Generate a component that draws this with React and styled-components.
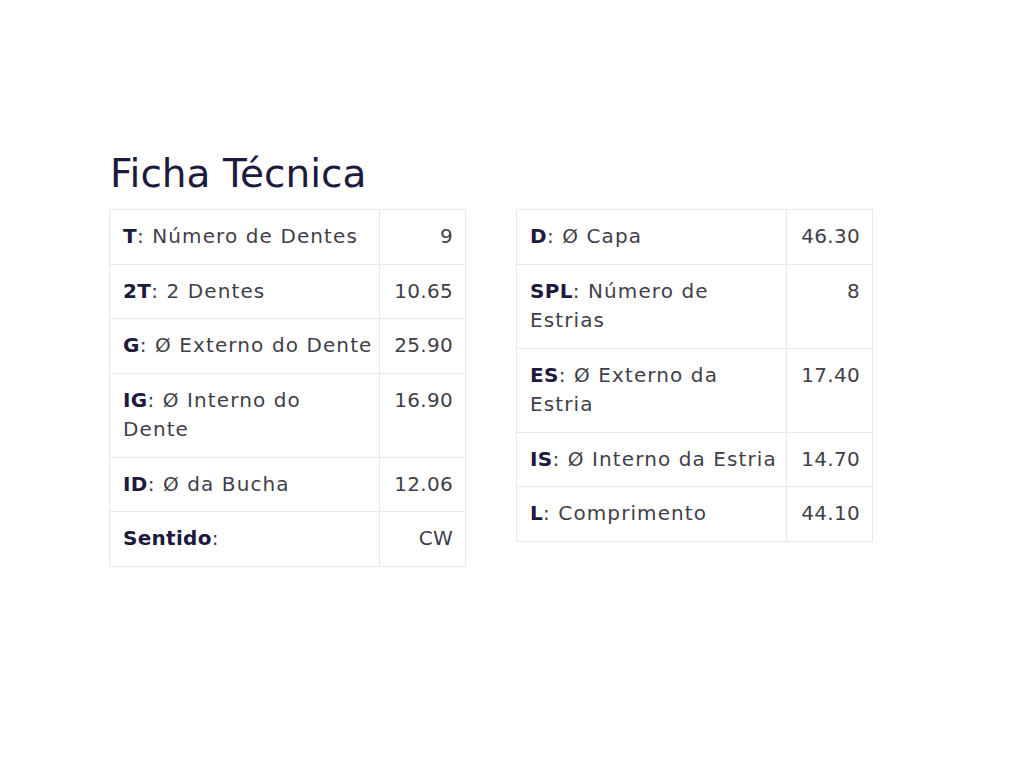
import styled, { createGlobalStyle } from "styled-components";

const GlobalStyle = createGlobalStyle`
  html, body {
    margin: 0;
    padding: 0;
    background: #ffffff;
  }
  body {
    font-family: "DejaVu Sans", "Open Sans", sans-serif;
  }
`;

const Page = styled.div`
  width: 1024px;
  height: 768px;
  padding: 149px 0 0 109px;
  box-sizing: border-box;
`;

const Title = styled.h2`
  margin: 0 0 11px 1px;
  font-family: "DejaVu Sans", "Open Sans", sans-serif;
  font-weight: 400;
  font-size: 39px;
  line-height: 49px;
  color: #1d1a3d;
`;

const Tables = styled.div`
  display: flex;
  align-items: flex-start;
  gap: 50px;
`;

const Table = styled.table`
  width: 357px;
  border-collapse: collapse;
  table-layout: fixed;
`;

const Cell = styled.td`
  border: 1px solid #e8e8ea;
  padding: 12px ${(p) => (p.$value ? "12px" : "6px")} 12px 13px;
  font-size: 20px;
  line-height: 29.5px;
  letter-spacing: ${(p) => (p.$value ? "0.3px" : "1.1px")};
  color: #3f3f4a;
  vertical-align: top;
  text-align: ${(p) => (p.$value ? "right" : "left")};
  width: ${(p) => (p.$value ? "86px" : "auto")};
  box-sizing: border-box;
`;

const Key = styled.strong`
  font-weight: 700;
  letter-spacing: 0.3px;
  color: #1d1a3d;
`;

const left = [
  ["T", "Número de Dentes", "9"],
  ["2T", "2 Dentes", "10.65"],
  ["G", "Ø Externo do Dente", "25.90"],
  ["IG", "Ø Interno do Dente", "16.90"],
  ["ID", "Ø da Bucha", "12.06"],
  ["Sentido", "", "CW"],
];

const right = [
  ["D", "Ø Capa", "46.30"],
  ["SPL", "Número de Estrias", "8"],
  ["ES", "Ø Externo da Estria", "17.40"],
  ["IS", "Ø Interno da Estria", "14.70"],
  ["L", "Comprimento", "44.10"],
];

function SpecTable({ rows }) {
  return (
    <Table>
      <tbody>
        {rows.map(([key, label, value]) => (
          <tr key={key}>
            <Cell>
              <Key>{key}</Key>:{label ? ` ${label}` : ""}
            </Cell>
            <Cell $value>{value}</Cell>
          </tr>
        ))}
      </tbody>
    </Table>
  );
}

export default function App() {
  return (
    <>
      <GlobalStyle />
      <Page>
        <Title>Ficha Técnica</Title>
        <Tables>
          <SpecTable rows={left} />
          <SpecTable rows={right} />
        </Tables>
      </Page>
    </>
  );
}
